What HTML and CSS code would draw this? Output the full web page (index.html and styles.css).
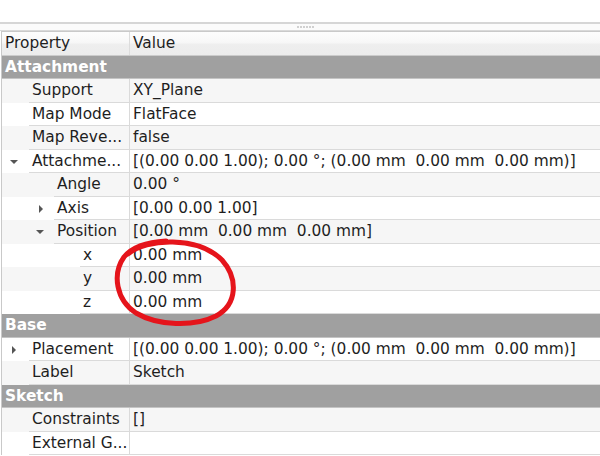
FILE: index.html
```html
<!DOCTYPE html>
<html lang="en">

<head>
    <meta charset="UTF-8">
    <meta name="viewport" content="width=device-width, initial-scale=1.0">
    <title>Property View</title>
    <link rel="stylesheet" href="styles.css">
</head>

<body>
    <div class="panel">
        <div class="top-space"></div>
        <div class="splitter">
            <div class="grip"><span></span><span></span><span></span><span></span><span></span><span></span></div>
        </div>
        <div class="tree">
            <div class="row header">
                <div class="name">Property</div>
                <div class="value">Value</div>
            </div>

            <div class="row group">Attachment</div>
            <div class="row alt">
                <div class="branch l1"></div>
                <div class="name">Support</div>
                <div class="value">XY_Plane</div>
            </div>
            <div class="row">
                <div class="branch l1"></div>
                <div class="name">Map Mode</div>
                <div class="value">FlatFace</div>
            </div>
            <div class="row alt">
                <div class="branch l1"></div>
                <div class="name">Map Reve...</div>
                <div class="value">false</div>
            </div>
            <div class="row">
                <div class="branch l1"><span class="arrow down"></span></div>
                <div class="name">Attachme...</div>
                <div class="value">[(0.00 0.00 1.00); 0.00 °; (0.00 mm  0.00 mm  0.00 mm)]</div>
            </div>
            <div class="row alt">
                <div class="branch l2"></div>
                <div class="name">Angle</div>
                <div class="value">0.00 °</div>
            </div>
            <div class="row">
                <div class="branch l2"><span class="arrow right"></span></div>
                <div class="name">Axis</div>
                <div class="value">[0.00 0.00 1.00]</div>
            </div>
            <div class="row alt">
                <div class="branch l2"><span class="arrow down"></span></div>
                <div class="name">Position</div>
                <div class="value">[0.00 mm  0.00 mm  0.00 mm]</div>
            </div>
            <div class="row">
                <div class="branch l3"></div>
                <div class="name">x</div>
                <div class="value">0.00 mm</div>
            </div>
            <div class="row alt">
                <div class="branch l3"></div>
                <div class="name">y</div>
                <div class="value">0.00 mm</div>
            </div>
            <div class="row">
                <div class="branch l3"></div>
                <div class="name">z</div>
                <div class="value">0.00 mm</div>
            </div>

            <div class="row group">Base</div>
            <div class="row">
                <div class="branch l1"><span class="arrow right"></span></div>
                <div class="name">Placement</div>
                <div class="value">[(0.00 0.00 1.00); 0.00 °; (0.00 mm  0.00 mm  0.00 mm)]</div>
            </div>
            <div class="row alt">
                <div class="branch l1"></div>
                <div class="name">Label</div>
                <div class="value">Sketch</div>
            </div>

            <div class="row group">Sketch</div>
            <div class="row alt">
                <div class="branch l1"></div>
                <div class="name">Constraints</div>
                <div class="value">[]</div>
            </div>
            <div class="row">
                <div class="branch l1"></div>
                <div class="name">External G...</div>
                <div class="value"></div>
            </div>
        </div>

        <!-- hand drawn mark over the x/y/z values -->
        <svg class="scribble" width="600" height="456" viewBox="0 0 600 456">
            <path d="M 128 254 C 146 238, 198 236, 222 260 C 238 278, 238 304, 216 316 C 194 327, 158 326, 136 313 C 116 300, 112 274, 124 257 C 133 246, 148 242, 166 241"
                fill="none" stroke="#e5141b" stroke-width="5" stroke-linecap="round" />
        </svg>
    </div>
</body>

</html>
```

FILE: styles.css
```css
body {
    margin: 0;
    background-color: #ffffff;
    font-family: 'DejaVu Sans', Verdana, sans-serif;
    font-size: 15.4px;
    color: #1e1e1e;
    overflow: hidden;
}

.panel {
    position: relative;
    width: 600px;
    height: 456px;
    overflow: hidden;
}

.top-space {
    height: 22px;
}

.splitter {
    height: 6px;
    border-top: 2px solid #d6d6d6;
    border-bottom: 1px solid #d9d9d9;
    background: #fbfbfb;
    display: flex;
    justify-content: center;
    align-items: center;
}

.grip {
    display: flex;
    gap: 1px;
    margin-left: 10px;
}

.grip span {
    width: 2px;
    height: 2px;
    background: #d0d0d0;
}

.tree {
    margin-left: 1px;
    border-top: 1px solid #c9c9c9;
    border-left: 1px solid #c9c9c9;
}

.row {
    display: flex;
    height: 23.53px;
    line-height: 23px;
    background: #ffffff;
    white-space: pre;
}

.row.alt {
    background: #f6f6f6;
}

.row.header {
    background: linear-gradient(#fdfdfd, #f7f7f7 45%, #eeeeee 55%, #ececec);
    border-bottom: 1px solid #cbcbcb;
    box-sizing: border-box;
}

.row.header .name {
    flex: none;
    width: 128px;
    padding-left: 3px;
    border-right: 1px solid #dcdcdc;
    border-bottom: none;
}

.row.header .value {
    border-bottom: none;
}

.row.group {
    background: #a0a0a0;
    color: #ffffff;
    font-weight: bold;
    padding-left: 3px;
    border-bottom: 1px solid #c4c4c4;
    box-sizing: border-box;
}

.branch {
    flex: none;
    position: relative;
}

.branch.l1 {
    width: 27px;
}

.branch.l2 {
    width: 52px;
}

.branch.l3 {
    width: 78px;
}

.arrow {
    position: absolute;
    top: 9px;
    width: 0;
    height: 0;
}

.l1 .arrow {
    left: 8px;
}

.l2 .arrow {
    left: 34px;
}

.arrow.down {
    top: 10px;
    border-left: 4px solid transparent;
    border-right: 4px solid transparent;
    border-top: 4px solid #555555;
}

.arrow.right {
    left: 10px;
    top: 8px;
    border-top: 4px solid transparent;
    border-bottom: 4px solid transparent;
    border-left: 4px solid #555555;
}

.l2 .arrow.right {
    left: 37px;
}

.name {
    flex: none;
    padding-left: 3px;
    border-right: 1px solid #dadada;
    border-bottom: 1px solid #dadada;
    box-sizing: border-box;
}

.branch.l1 + .name {
    width: 101px;
}

.branch.l2 + .name {
    width: 76px;
}

.branch.l3 + .name {
    width: 50px;
}

.value {
    flex: 1;
    padding-left: 3px;
    border-bottom: 1px solid #dadada;
    box-sizing: border-box;
}

.scribble {
    position: absolute;
    top: 0;
    left: 0;
    pointer-events: none;
}
```
